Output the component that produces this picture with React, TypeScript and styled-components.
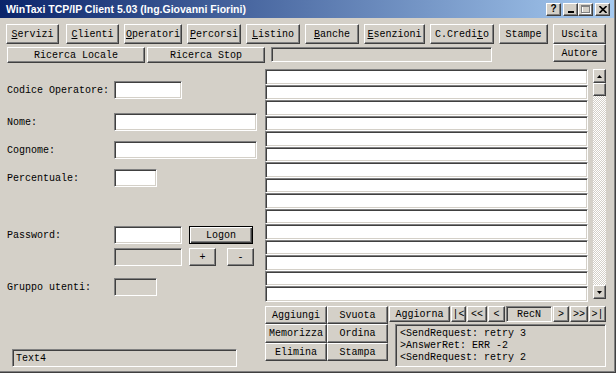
import React from 'react';
import styled, { createGlobalStyle, css } from 'styled-components';

const GlobalStyle = createGlobalStyle`
    html, body {
        margin: 0;
        padding: 0;
        background: #d4d0c8;
    }
    body {
        width: 616px;
        height: 373px;
        overflow: hidden;
        font-family: "Liberation Mono", "DejaVu Sans Mono", monospace;
        font-size: 10px;
        color: #000;
    }
    * {
        box-sizing: border-box;
    }
`;

const raised = css`
    border: 1px solid;
    border-color: #fff #404040 #404040 #fff;
    box-shadow: inset -1px -1px #808080, inset 1px 1px #d4d0c8;
`;

const sunken = css`
    border: 1px solid;
    border-color: #808080 #fff #fff #808080;
    box-shadow: inset 1px 1px #404040, inset -1px -1px #d4d0c8;
`;

const Window = styled.div`
    width: 616px;
    height: 373px;
    background: #d4d0c8;
    display: flex;
    flex-direction: column;
    box-shadow: inset -1px -1px #404040, inset -2px -2px #808080;
`;

const TitleBar = styled.div`
    height: 18px;
    flex: none;
    display: flex;
    align-items: center;
    justify-content: space-between;
    padding: 0 4px 0 6px;
    margin-right: 2px;
    background: linear-gradient(to right, #0a246a, #a6caf0);
`;

const TitleText = styled.span`
    font-family: "Liberation Sans", Arial, sans-serif;
    font-weight: bold;
    font-size: 10.5px;
    color: #fff;
    white-space: nowrap;
`;

const CaptionButtons = styled.div`
    display: flex;
    align-items: center;
`;

const CaptionButton = styled.div<{ $ml?: number }>`
    ${raised};
    width: 15px;
    height: 13px;
    margin-left: ${p => p.$ml ?? 0}px;
    background: #d4d0c8;
    display: flex;
    align-items: center;
    justify-content: center;
    font-family: "Liberation Sans", Arial, sans-serif;
    font-weight: bold;
    font-size: 10px;
    line-height: 1;
`;

const Toolbar = styled.div`
    display: flex;
    padding: 6px 0 0 6px;
    height: 26px;
    flex: none;
`;

const Btn = styled.button<{ $w: number; $h?: number; $ml?: number; $mt?: number }>`
    ${raised};
    appearance: none;
    width: ${p => p.$w}px;
    height: ${p => p.$h ?? 20}px;
    margin: ${p => p.$mt ?? 0}px 0 0 ${p => p.$ml ?? 0}px;
    padding: 0;
    background: #d4d0c8;
    font-family: inherit;
    font-size: 10px;
    color: #000;
    display: flex;
    align-items: center;
    justify-content: center;
    white-space: nowrap;
    flex: none;
    u {
        text-underline-offset: 1px;
    }
`;

const DefaultBtn = styled(Btn)`
    border: 1px solid #000;
    box-shadow: inset 1px 1px #fff, inset -1px -1px #404040, inset -2px -2px #808080;
`;

const SearchRow = styled.div`
    display: flex;
    align-items: flex-start;
    height: 19px;
    flex: none;
`;

const Field = styled.div<{ $w: number; $h?: number; $ml?: number; $mt?: number; $white?: boolean }>`
    ${sunken};
    width: ${p => p.$w}px;
    height: ${p => p.$h ?? 18}px;
    margin: ${p => p.$mt ?? 0}px 0 0 ${p => p.$ml ?? 0}px;
    background: ${p => (p.$white ? '#fff' : '#d4d0c8')};
    flex: none;
    display: flex;
    align-items: center;
    padding-left: 3px;
    white-space: nowrap;
`;

const Spacer = styled.div`
    flex: 1;
`;

const Main = styled.div`
    flex: 1;
    display: flex;
`;

const FormColumn = styled.div`
    width: 265px;
    flex: none;
    display: flex;
    flex-direction: column;
    padding-left: 7px;
`;

const FormRow = styled.div<{ $mt: number }>`
    display: flex;
    align-items: center;
    height: 18px;
    margin-top: ${p => p.$mt}px;
`;

const Label = styled.span`
    width: 107px;
    flex: none;
    white-space: nowrap;
`;

const RightColumn = styled.div`
    flex: 1;
    display: flex;
    flex-direction: column;
    padding-top: 6px;
`;

const ListArea = styled.div`
    display: flex;
    height: 233px;
`;

const Rows = styled.div`
    width: 323px;
    display: grid;
    grid-template-rows: repeat(15, 1fr);
`;

const RowCell = styled.div`
    ${sunken};
    background: #fff;
`;

const ScrollBar = styled.div`
    width: 13px;
    height: 230px;
    margin-left: 5px;
    display: flex;
    flex-direction: column;
`;

const ScrollButton = styled.div<{ $h: number }>`
    ${raised};
    height: ${p => p.$h}px;
    background: #d4d0c8;
    display: flex;
    align-items: center;
    justify-content: center;
    flex: none;
`;

const Track = styled.div`
    flex: 1;
    background: repeating-conic-gradient(#ffffff 0 25%, #d4d0c8 0 50%) 0 0 / 2px 2px;
`;

const BottomPanel = styled.div`
    display: flex;
    margin-top: 4px;
`;

const ActionGrid = styled.div`
    display: grid;
    grid-template-columns: 62px 61px;
    grid-template-rows: 18px 19px 18px;
    flex: none;
`;

const GridBtn = styled.button`
    ${raised};
    appearance: none;
    padding: 0;
    background: #d4d0c8;
    font-family: inherit;
    font-size: 10px;
    color: #000;
`;

const NavSide = styled.div`
    display: flex;
    flex-direction: column;
    margin-left: 1px;
`;

const NavRow = styled.div`
    display: flex;
`;

const LogBox = styled.div`
    ${sunken};
    width: 211px;
    height: 43px;
    margin: 2px 0 0 6px;
    background: #d4d0c8;
    padding: 3px 4px;
    line-height: 12px;
    white-space: pre;
`;

const RecField = styled(Field)`
    justify-content: center;
    padding-left: 0;
`;

const Triangle = ({ up }: { up?: boolean }) => (
    <svg width="5" height="3" viewBox="0 0 5 3">
        <path d={up ? 'M2.5 0 L5 3 L0 3 Z' : 'M0 0 L5 0 L2.5 3 Z'} fill="#000" />
    </svg>
);

const toolButtons: { label: React.ReactNode; w: number; ml: number }[] = [
    { label: <><u>S</u>ervizi</>, w: 53, ml: 0 },
    { label: <><u>C</u>lienti</>, w: 53, ml: 7 },
    { label: <><u>O</u>peratori</>, w: 58, ml: 5 },
    { label: <><u>P</u>ercorsi</>, w: 54, ml: 5 },
    { label: <><u>L</u>istino</>, w: 54, ml: 5 },
    { label: <><u>B</u>anche</>, w: 54, ml: 5 },
    { label: <><u>E</u>senzioni</>, w: 61, ml: 5 },
    { label: <>C.Credi<u>t</u>o</>, w: 64, ml: 5 },
    { label: 'Stampe', w: 49, ml: 5 },
    { label: 'Uscita', w: 53, ml: 5 },
];

const navButtons = [
    { label: '|<', w: 15 },
    { label: '<<', w: 20 },
    { label: '<', w: 17 },
];
const navButtonsRight = [
    { label: '>', w: 16 },
    { label: '>>', w: 18 },
    { label: '>|', w: 17 },
];

export default function App() {
    return (
        <>
            <GlobalStyle />
            <Window>
                <TitleBar>
                    <TitleText>WinTaxi TCP/IP Client 5.03 (Ing.Giovanni Fiorini)</TitleText>
                    <CaptionButtons>
                        <CaptionButton>?</CaptionButton>
                        <CaptionButton $ml={2}>
                            <svg width="6" height="8" viewBox="0 0 6 8">
                                <rect x="0" y="6" width="6" height="2" fill="#000" />
                            </svg>
                        </CaptionButton>
                        <CaptionButton>
                            <svg width="10" height="9" viewBox="0 0 10 9">
                                <rect x="1.5" y="1.5" width="8" height="7" fill="none" stroke="#fff" />
                                <rect x="0.5" y="0.5" width="8" height="7" fill="none" stroke="#808080" />
                                <rect x="0" y="1" width="9" height="1" fill="#808080" />
                            </svg>
                        </CaptionButton>
                        <CaptionButton $ml={2}>
                            <svg width="8" height="7" viewBox="0 0 8 7">
                                <path d="M0.5 0 L7.5 7 M7.5 0 L0.5 7" stroke="#000" strokeWidth="1.6" />
                            </svg>
                        </CaptionButton>
                    </CaptionButtons>
                </TitleBar>

                <Toolbar>
                    {toolButtons.map((b, i) => (
                        <Btn key={i} $w={b.w} $ml={b.ml}>
                            {b.label}
                        </Btn>
                    ))}
                </Toolbar>

                <SearchRow>
                    <Btn $w={138} $h={16} $ml={7} $mt={3}>Ricerca Locale</Btn>
                    <Btn $w={118} $h={16} $ml={2} $mt={3}>Ricerca Stop</Btn>
                    <Field $w={221} $h={15} $ml={6} $mt={3} />
                    <Spacer />
                    <Btn $w={53} $h={18} style={{ marginRight: 10 }}>Autore</Btn>
                </SearchRow>

                <Main>
                    <FormColumn>
                        <FormRow $mt={18}>
                            <Label>Codice Operatore:</Label>
                            <Field $w={68} $white />
                        </FormRow>
                        <FormRow $mt={14}>
                            <Label>Nome:</Label>
                            <Field $w={143} $white />
                        </FormRow>
                        <FormRow $mt={10}>
                            <Label>Cognome:</Label>
                            <Field $w={143} $white />
                        </FormRow>
                        <FormRow $mt={10}>
                            <Label>Percentuale:</Label>
                            <Field $w={43} $white />
                        </FormRow>
                        <FormRow $mt={39}>
                            <Label>Password:</Label>
                            <Field $w={68} $white />
                            <DefaultBtn $w={64} $h={18} $ml={7}>Logon</DefaultBtn>
                        </FormRow>
                        <FormRow $mt={4}>
                            <Label />
                            <Field $w={68} />
                            <Btn $w={27} $h={18} $ml={7}>+</Btn>
                            <Btn $w={27} $h={18} $ml={11}>-</Btn>
                        </FormRow>
                        <FormRow $mt={12}>
                            <Label>Gruppo utenti:</Label>
                            <Field $w={43} />
                        </FormRow>
                        <FormRow $mt={53}>
                            <Field $w={225} $ml={5}>Text4</Field>
                        </FormRow>
                    </FormColumn>

                    <RightColumn>
                        <ListArea>
                            <Rows>
                                {Array.from({ length: 15 }).map((_, i) => (
                                    <RowCell key={i} />
                                ))}
                            </Rows>
                            <ScrollBar>
                                <ScrollButton $h={14}>
                                    <Triangle up />
                                </ScrollButton>
                                <ScrollButton $h={13} />
                                <Track />
                                <ScrollButton $h={14}>
                                    <Triangle />
                                </ScrollButton>
                            </ScrollBar>
                        </ListArea>

                        <BottomPanel>
                            <ActionGrid>
                                <GridBtn>Aggiungi</GridBtn>
                                <GridBtn>Svuota</GridBtn>
                                <GridBtn>Memorizza</GridBtn>
                                <GridBtn>Ordina</GridBtn>
                                <GridBtn>Elimina</GridBtn>
                                <GridBtn>Stampa</GridBtn>
                            </ActionGrid>
                            <NavSide>
                                <NavRow>
                                    <Btn $w={61} $h={16}>Aggiorna</Btn>
                                    {navButtons.map(b => (
                                        <Btn key={b.label} $w={b.w} $h={16} $ml={1}>
                                            {b.label}
                                        </Btn>
                                    ))}
                                    <RecField $w={46} $h={16} $ml={1}>RecN</RecField>
                                    {navButtonsRight.map(b => (
                                        <Btn key={b.label} $w={b.w} $h={16} $ml={1}>
                                            {b.label}
                                        </Btn>
                                    ))}
                                </NavRow>
                                <LogBox>
                                    {'<SendRequest: retry 3\n>AnswerRet: ERR -2\n<SendRequest: retry 2'}
                                </LogBox>
                            </NavSide>
                        </BottomPanel>
                    </RightColumn>
                </Main>
            </Window>
        </>
    );
}
